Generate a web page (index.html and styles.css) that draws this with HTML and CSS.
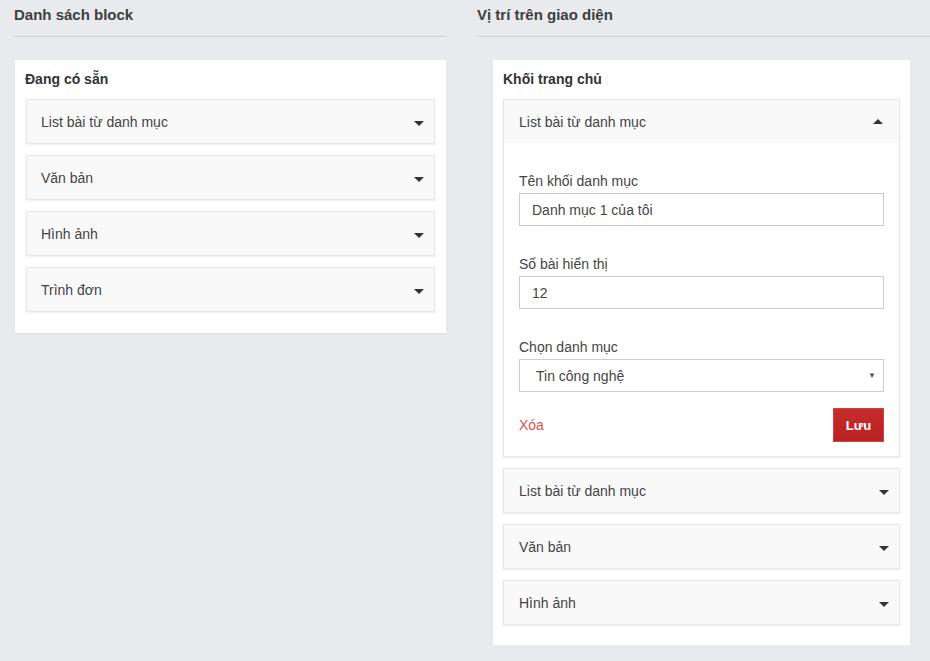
FILE: index.html
```html
<!DOCTYPE html>
<html lang="vi">
<head>
<meta charset="utf-8">
<title>Block</title>
<link rel="stylesheet" href="styles.css">
</head>
<body>
<div class="page">
  <section class="col col-left">
    <h2 class="col-title">Danh sách block</h2>
    <div class="card card-left">
      <h3 class="card-title">Đang có sẵn</h3>
      <div class="items">
        <div class="item"><div class="item-head"><span>List bài từ danh mục</span><i class="caret"></i></div></div>
        <div class="item"><div class="item-head"><span>Văn bản</span><i class="caret"></i></div></div>
        <div class="item"><div class="item-head"><span>Hình ảnh</span><i class="caret"></i></div></div>
        <div class="item"><div class="item-head"><span>Trình đơn</span><i class="caret"></i></div></div>
      </div>
    </div>
  </section>
  <section class="col col-right">
    <h2 class="col-title">Vị trí trên giao diện</h2>
    <div class="card card-right">
      <h3 class="card-title">Khối trang chủ</h3>
      <div class="items">
        <div class="item open">
          <div class="item-head"><span>List bài từ danh mục</span><i class="caret up"></i></div>
          <div class="item-body">
            <label class="field">
              <span class="field-label">Tên khối danh mục</span>
              <input class="input" type="text" value="Danh mục 1 của tôi">
            </label>
            <label class="field">
              <span class="field-label">Số bài hiển thị</span>
              <input class="input" type="text" value="12">
            </label>
            <div class="field field-last">
              <span class="field-label">Chọn danh mục</span>
              <div class="select"><span>Tin công nghệ</span><span class="select-arrow">▼</span></div>
            </div>
            <div class="actions">
              <a class="delete">Xóa</a>
              <button class="save" type="button">Lưu</button>
            </div>
          </div>
        </div>
        <div class="item"><div class="item-head"><span>List bài từ danh mục</span><i class="caret"></i></div></div>
        <div class="item"><div class="item-head"><span>Văn bản</span><i class="caret"></i></div></div>
        <div class="item"><div class="item-head"><span>Hình ảnh</span><i class="caret"></i></div></div>
      </div>
    </div>
  </section>
</div>
</body>
</html>
```
FILE: styles.css
```css
* { box-sizing: border-box; }
html, body {
  margin: 0;
  background: #e9eaed;
  font-family: "Liberation Sans", Arial, sans-serif;
  color: #444;
}
.page {
  display: grid;
  grid-template-columns: 432px 453px;
  column-gap: 31px;
  padding-left: 14px;
  align-items: start;
}
.col-title {
  margin: 0;
  font-size: 15px;
  font-weight: bold;
  line-height: 20px;
  color: #3e3e40;
  padding: 5px 0 11px;
  border-bottom: 1px solid #d0d1d4;
}
.card {
  background: #fff;
  margin-top: 23px;
  box-shadow: 0 1px 2px rgba(0,0,0,0.06);
}
.card-left {
  margin-left: 1px;
  padding: 9px 11px 21px 11px;
}
.card-right {
  margin-left: 16px;
  width: 417px;
  padding: 9px 10px 20px 10px;
}
.card-title {
  margin: 0 0 10px;
  font-size: 14px;
  font-weight: bold;
  line-height: 20px;
  color: #333;
}
.card-left .card-title { margin-left: -1px; }
.items {
  display: flex;
  flex-direction: column;
  gap: 11px;
}
.item {
  border: 1px solid #e7e7e7;
  background: #fff;
  box-shadow: 0 1px 2px rgba(0,0,0,0.08);
}
.item-head {
  height: 43px;
  background: #f9f9f9;
  display: flex;
  align-items: center;
  justify-content: space-between;
  padding: 0 10px 0 14px;
  font-size: 14px;
  color: #444;
}
.card-right .item-head { padding-left: 15px; }
.caret {
  display: block;
  width: 0;
  height: 0;
  border-left: 5px solid transparent;
  border-right: 5px solid transparent;
  border-top: 5px solid #333;
  margin-top: 3px;
}
.caret.up {
  border-top: 0;
  border-bottom: 5px solid #333;
  margin-top: 0;
  margin-right: 6px;
}
.item-body {
  padding: 28px 15px 14px 15px;
}
.field {
  display: block;
  margin-bottom: 28px;
}
.field.field-last { margin-bottom: 0; }
.field-label {
  display: block;
  font-size: 14px;
  line-height: 20px;
  color: #444;
  margin-bottom: 2px;
}
.input {
  display: block;
  width: 100%;
  height: 33px;
  border: 1px solid #cccccc;
  padding: 0 12px;
  font-family: inherit;
  font-size: 14px;
  color: #444;
  background: #fff;
  outline: none;
}
.select {
  height: 33px;
  border: 1px solid #cccccc;
  display: flex;
  align-items: center;
  justify-content: space-between;
  padding: 0 7px 0 16px;
  font-size: 14px;
  color: #444;
}
.select-arrow {
  font-size: 8px;
  color: #555;
}
.actions {
  display: flex;
  align-items: center;
  justify-content: space-between;
  margin-top: 16px;
}
.delete {
  font-size: 14px;
  color: #d9534f;
  cursor: pointer;
}
.save {
  width: 51px;
  height: 34px;
  border: 1px solid #d8403f;
  background: linear-gradient(#c62c2c, #b82222);
  color: #fff;
  font-family: inherit;
  font-size: 13px;
  font-weight: bold;
  padding: 0;
  cursor: pointer;
}
```
